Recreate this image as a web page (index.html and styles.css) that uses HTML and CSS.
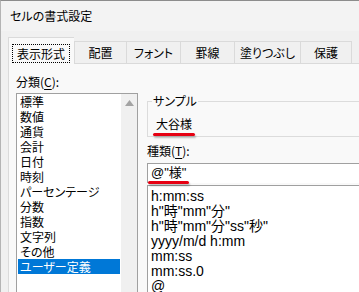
FILE: index.html
```html
<!DOCTYPE html>
<html lang="ja">
<head>
    <meta charset="UTF-8">
    <title>セルの書式設定</title>
    <link rel="stylesheet" href="styles.css">
</head>
<body>
    <div class="window">
        <div class="titlebar">セルの書式設定</div>

        <div class="tabs">
            <div class="tab active"><span class="focus">表示形式</span></div>
            <div class="tab w52">配置</div>
            <div class="tab w54">フォント</div>
            <div class="tab w54">罫線</div>
            <div class="tab w66">塗りつぶし</div>
            <div class="tab w52 last">保護</div>
        </div>

        <div class="panel">
            <div class="col-left">
                <div class="label">分類(<u>C</u>):</div>
                <div class="listbox">
                    <ul class="categories">
                        <li>標準</li>
                        <li>数値</li>
                        <li>通貨</li>
                        <li>会計</li>
                        <li>日付</li>
                        <li>時刻</li>
                        <li>パーセンテージ</li>
                        <li>分数</li>
                        <li>指数</li>
                        <li>文字列</li>
                        <li>その他</li>
                        <li class="selected">ユーザー定義</li>
                    </ul>
                    <div class="scrollbar">
                        <svg width="9" height="6" viewBox="0 0 9 6"><path d="M0 6 L4.5 0 L9 6 Z" fill="#a3a3a3"/></svg>
                    </div>
                </div>
            </div>

            <div class="col-right">
                <fieldset class="sample">
                    <legend>サンプル</legend>
                    <span class="mark">大谷様</span>
                </fieldset>

                <div class="label">種類(<u>T</u>):</div>
                <div class="input"><span class="mark">@"様"</span></div>

                <ul class="formats">
                    <li>h:mm:ss</li>
                    <li>h"時"mm"分"</li>
                    <li>h"時"mm"分"ss"秒"</li>
                    <li>yyyy/m/d h:mm</li>
                    <li>mm:ss</li>
                    <li>mm:ss.0</li>
                    <li>@</li>
                </ul>
            </div>
        </div>
    </div>
</body>
</html>
```

FILE: styles.css
```css
body {
    margin: 0;
    overflow: hidden;
    background-color: #f0f0f0;
    font-family: "Noto Sans CJK JP", "Noto Sans", sans-serif;
    font-feature-settings: "palt";
    font-size: 12px;
    color: #000;
}

.window {
    height: 291px;
    border-top: 1px solid #8c8c8c;
    border-left: 1px solid #b4b4b4;
    background-color: #f0f0f0;
}

.titlebar {
    height: 30px;
    line-height: 29px;
    padding-left: 9px;
    background-color: #f3f3f3;
}

/* Tab strip */
.tabs {
    display: flex;
    align-items: flex-end;
    height: 32px;
    padding-left: 7px;
}

.tab {
    box-sizing: border-box;
    height: 22px;
    line-height: 22px;
    text-align: center;
    background-color: #f0f0f0;
    border: 1px solid #dadada;
    border-bottom: none;
    border-right: none;
}

.tab.last {
    border-right: 1px solid #dadada;
}

.tab.active {
    width: 66px;
    height: 27px;
    margin-bottom: -1px;
    padding: 5px 0 0 3px;
    text-align: left;
    background-color: #f9f9f9;
    position: relative;
    z-index: 1;
}

.focus {
    display: inline-block;
    width: 58px;
    height: 19px;
    line-height: 18px;
    box-sizing: border-box;
    border: 1px dotted #000;
    text-align: center;
}

.w52 { width: 52px; }
.w54 { width: 54px; }
.w66 { width: 66px; }

/* Page */
.panel {
    display: flex;
    height: 240px;
    margin-left: 7px;
    padding: 10px 0 0 7px;
    background-color: #f9f9f9;
    border-top: 1px solid #dadada;
    border-left: 1px solid #dadada;
}

.label {
    line-height: 16px;
}

.label u {
    text-underline-offset: 2px;
}

.col-left {
    width: 122px;
    flex-shrink: 0;
}

.listbox {
    display: flex;
    height: 220px;
    margin-top: 3px;
    border: 1px solid #a0a0a0;
    background-color: #fff;
}

.categories {
    flex: 1;
    list-style: none;
    margin: 0;
    padding: 0 1px;
}

.categories li {
    height: 15px;
    line-height: 15px;
    padding-left: 2px;
    white-space: nowrap;
}

.categories li.selected {
    background-color: #0078d7;
    color: #fff;
}

.scrollbar {
    width: 16px;
    padding-top: 6px;
    box-sizing: border-box;
    background-color: #f0f0f0;
}

.scrollbar svg {
    display: block;
    margin: 0 auto;
}

.col-right {
    width: 260px;
    flex-shrink: 0;
    margin-left: 9px;
    padding-top: 19px;
}

.sample {
    margin: 0;
    height: 44px;
    box-sizing: border-box;
    padding: 7px 8px 0 8px;
    border: 1px solid #dcdcdc;
    line-height: 16px;
}

.sample legend {
    padding: 0 1px;
    margin-left: -4px;
    line-height: 16px;
}

.sample + .label {
    margin-top: 6px;
}

.mark {
    position: relative;
}

/* red hand-drawn underline */
.mark::after {
    content: "";
    position: absolute;
    left: -3px;
    right: -3px;
    bottom: -4px;
    height: 3px;
    border-radius: 2px;
    background-color: #e60012;
    box-shadow: 1px 2px 2px rgba(0, 0, 0, 0.25);
}

.input {
    height: 20px;
    margin-top: 4px;
    box-sizing: border-box;
    padding-left: 3px;
    line-height: 18px;
    border: 1px solid #a0a0a0;
    border-bottom: none;
    background-color: #fff;
    font-family: "Liberation Sans", "Noto Sans CJK JP", sans-serif;
    font-size: 13px;
}

.formats {
    list-style: none;
    margin: 2px 0 0;
    padding: 3px 0 0 3px;
    height: 120px;
    border: 1px solid #a0a0a0;
    background-color: #fff;
    font-family: "Liberation Sans", "Noto Sans CJK JP", sans-serif;
    font-size: 14px;
}

.formats li {
    height: 15px;
    line-height: 15px;
    white-space: nowrap;
}
```
